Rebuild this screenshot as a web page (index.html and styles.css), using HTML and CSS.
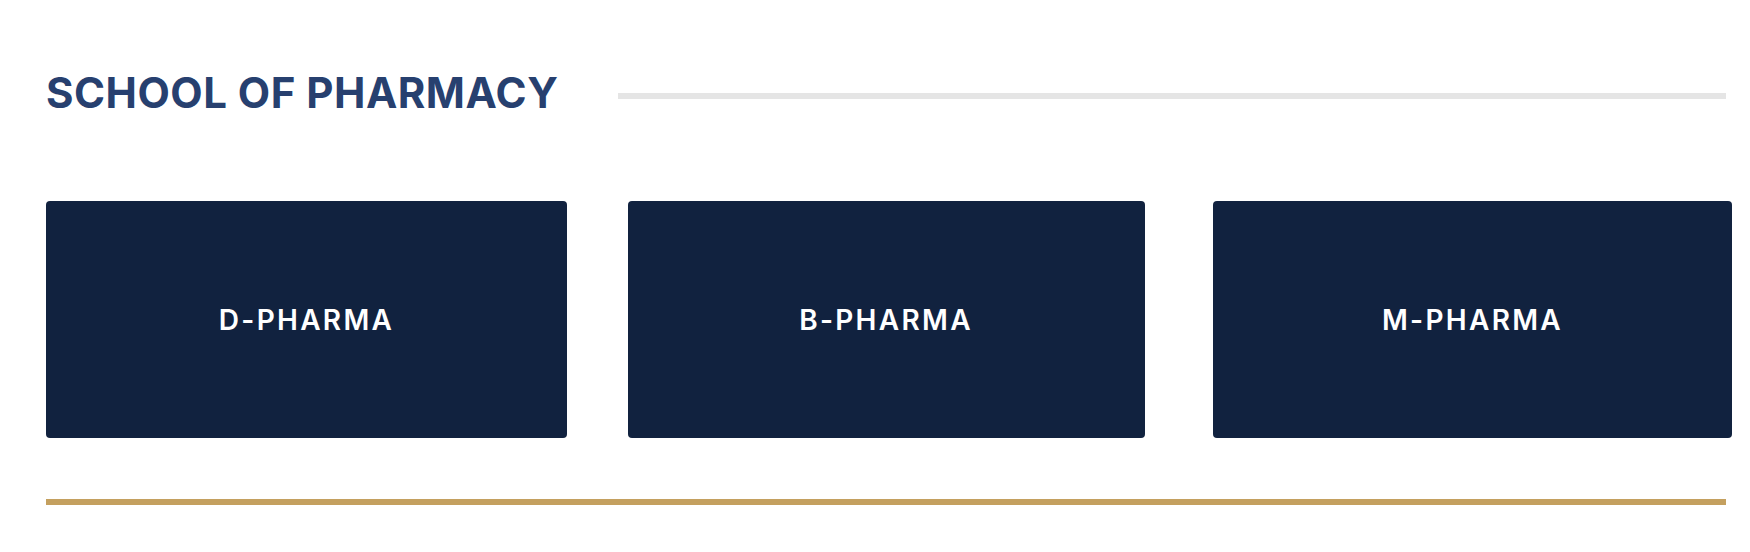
FILE: index.html
```html
<!DOCTYPE html>
<html lang="en">
<head>
<meta charset="UTF-8">
<meta name="viewport" content="width=device-width, initial-scale=1.0">
<title>School of Pharmacy</title>
<link rel="stylesheet" href="styles.css">
</head>
<body>

  <section class="school">
    <div class="school-head">
      <h2 class="school-title">SCHOOL OF PHARMACY</h2>
      <span class="school-rule"></span>
    </div>

    <div class="course-list">
      <a class="course-card" href="#">D-PHARMA</a>
      <a class="course-card" href="#">B-PHARMA</a>
      <a class="course-card" href="#">M-PHARMA</a>
    </div>

    <div class="school-foot"></div>
  </section>

</body>
</html>
```

FILE: styles.css
```css
  body {
    margin: 0;
    font-family: Inter, "Open Sans", sans-serif;
    background: #fff;
  }
  .school {
    padding: 62px 18px 0 46px;
  }
  .school-head {
    display: flex;
    align-items: center;
    margin-right: 6px;
    height: 60px;
  }
  .school-title {
    margin: 0;
    font-size: 42px;
    font-weight: 700;
    color: #27406f;
    letter-spacing: 0.5px;
    white-space: nowrap;
  }
  .school-rule {
    flex: 1;
    height: 6px;
    margin-left: 60px;
    margin-top: 8px;
    background-color: #e5e5e5;
  }
  .course-list {
    display: grid;
    grid-template-columns: 521px 517px 519px;
    justify-content: space-between;
    margin-top: 79px;
  }
  .course-card {
    height: 237px;
    display: flex;
    align-items: center;
    justify-content: center;
    background-color: #11223f;
    border-radius: 4px;
    color: #fff;
    font-size: 28px;
    font-weight: 600;
    letter-spacing: 2.3px;
    text-decoration: none;
  }
  .course-card:nth-child(2) {
    margin: 0 4px 0 -4px;
  }
  .school-foot {
    height: 6px;
    margin: 61px 6px 0 0;
    background-color: #c4a05f;
  }
```
